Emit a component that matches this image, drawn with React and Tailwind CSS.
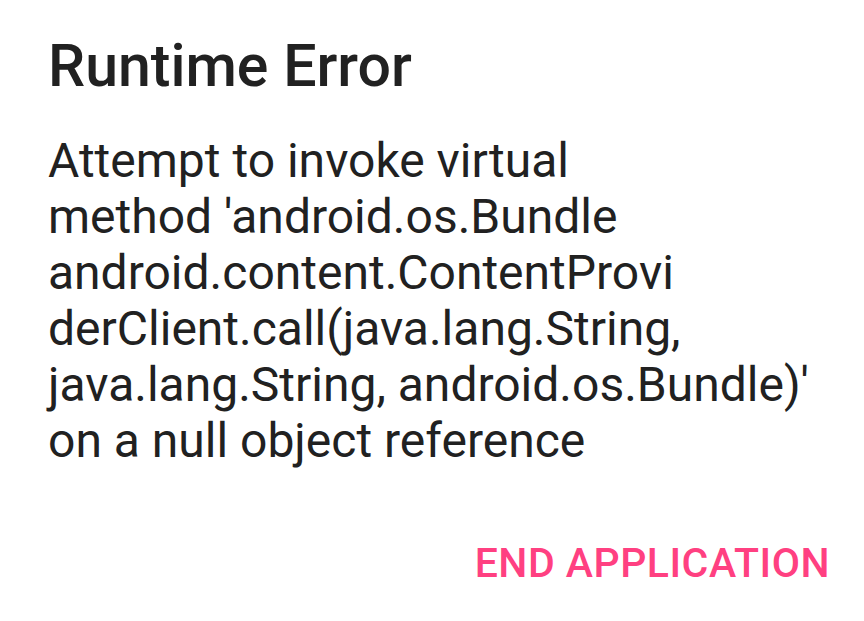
export default function App() {
  const lines = [
    "Attempt to invoke virtual",
    "method 'android.os.Bundle",
    "android.content.ContentProvi",
    "derClient.call(java.lang.String,",
    "java.lang.String, android.os.Bundle)'",
    "on a null object reference",
  ];

  return (
    <div className="h-[621px] w-[864px] bg-white font-['Roboto',sans-serif] flex flex-col">
      <div className="pl-12 pt-[31px]">
        <h1 className="text-[59px] leading-[69px] font-medium text-[#212121]">Runtime Error</h1>
      </div>
      <div className="pl-12 pt-[33px] text-[48px] leading-[56px] text-[#212121] whitespace-nowrap">
        {lines.map((l) => (
          <div key={l}>{l}</div>
        ))}
      </div>
      <div className="mt-auto flex justify-end pr-[34px] pb-[34px]">
        <button className="text-[41px] leading-[48px] font-medium text-[#ff4081] tracking-[0.5px]">
          END APPLICATION
        </button>
      </div>
    </div>
  );
}
